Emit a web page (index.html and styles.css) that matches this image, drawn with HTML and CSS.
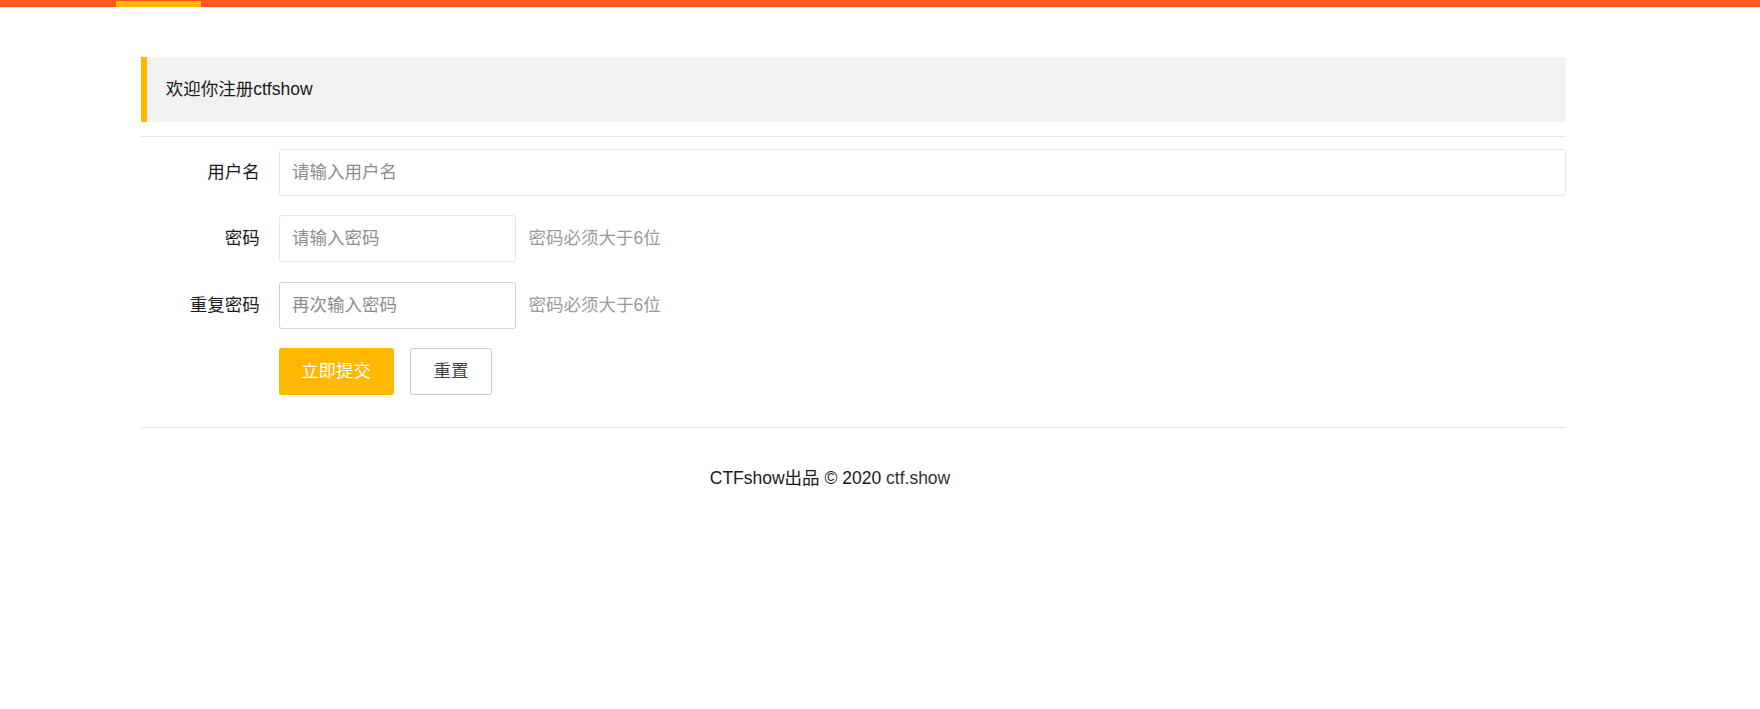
FILE: index.html
```html
<!DOCTYPE html>
<html lang="zh-CN">
<head>
<meta charset="utf-8">
<title>ctfshow 注册</title>
<link rel="stylesheet" href="styles.css">
</head>
<body>
<div class="topnav"><span class="nav-this"></span></div>
<div class="container">
  <blockquote class="quote">欢迎你注册ctfshow</blockquote>
  <hr class="divider divider-top">
  <form class="form">
    <div class="item">
      <label class="label">用户名</label>
      <div class="block"><input class="input" type="text" placeholder="请输入用户名"></div>
    </div>
    <div class="item">
      <label class="label">密码</label>
      <div class="inline"><input class="input" type="password" placeholder="请输入密码"></div>
      <div class="aux">密码必须大于6位</div>
    </div>
    <div class="item">
      <label class="label">重复密码</label>
      <div class="inline"><input class="input input-hover" type="password" placeholder="再次输入密码"></div>
      <div class="aux">密码必须大于6位</div>
    </div>
    <div class="item actions">
      <button class="btn btn-warm" type="button">立即提交</button>
      <button class="btn btn-primary" type="button">重置</button>
    </div>
  </form>
  <hr class="divider divider-bottom">
  <div class="footer">CTFshow出品 © 2020 <a class="link" href="#">ctf.show</a></div>
</div>
</body>
</html>
```

FILE: styles.css
```css
* { box-sizing: border-box; }
html, body { margin: 0; padding: 0; background: #fff; }
body {
  font-family: "Liberation Sans", Arial, "Noto Sans CJK SC", sans-serif;
  font-size: 17.5px;
  line-height: 27.5px;
  color: #1a1a1a;
}
.topnav {
  height: 7px;
  background: #FF5722;
  display: flex;
  padding-left: 116px;
}
.nav-this {
  display: block;
  width: 85px;
  height: 6px;
  margin-top: 1px;
  background: #FFB800;
}
.container {
  width: 1425px;
  margin: 50px 0 0 141px;
}
.quote {
  margin: 0;
  padding: 18.75px;
  line-height: 27.5px;
  background: #f2f2f2;
  border-left: 6.25px solid #FFB800;
  border-radius: 0 2.5px 2.5px 0;
}
.divider {
  border: 0;
  height: 1px;
  background: #e6e6e6;
  margin: 0;
}
.divider-top { margin-top: 13.5px; margin-bottom: 12.5px; }
.divider-bottom { margin-top: 32px; margin-bottom: 0; }
.form { margin: 0; }
.item {
  display: flex;
  align-items: stretch;
  margin-bottom: 19.25px;
}
.item:last-child { margin-bottom: 0; }
.label {
  flex: 0 0 137.5px;
  width: 137.5px;
  padding: 0 18.75px;
  text-align: right;
  line-height: 47px;
}
.block { flex: 1; }
.inline { width: 237.5px; flex: 0 0 237.5px; }
.input {
  display: block;
  width: 100%;
  height: 47px;
  padding: 0 12.5px;
  border: 1px solid #e6e6e6;
  border-radius: 2.5px;
  background: #fff;
  font-family: inherit;
  font-size: 17.5px;
  color: #333;
  outline: none;
}
.input-hover { border-color: #d2d2d2; }
.input::placeholder { color: #8c8c8c; }
.aux {
  margin-left: 12.5px;
  line-height: 47px;
  color: #999;
}
.actions { padding-left: 137.5px; }
.btn {
  height: 47.5px;
  font-family: inherit;
  font-size: 17.5px;
  border-radius: 2.5px;
  cursor: pointer;
  white-space: nowrap;
}
.btn-warm {
  padding: 0 22.5px;
  line-height: 47.5px;
  background: #FFB800;
  color: #fff;
  border: 0;
}
.btn-primary {
  margin-left: 16.5px;
  padding: 0 22.5px;
  line-height: 45.5px;
  background: #fff;
  color: #444;
  border: 1px solid #C9C9C9;
}
.footer {
  padding: 36.5px 47px 0 0;
  text-align: center;
  line-height: 27.5px;
}
.link { color: #333; text-decoration: none; }
```
